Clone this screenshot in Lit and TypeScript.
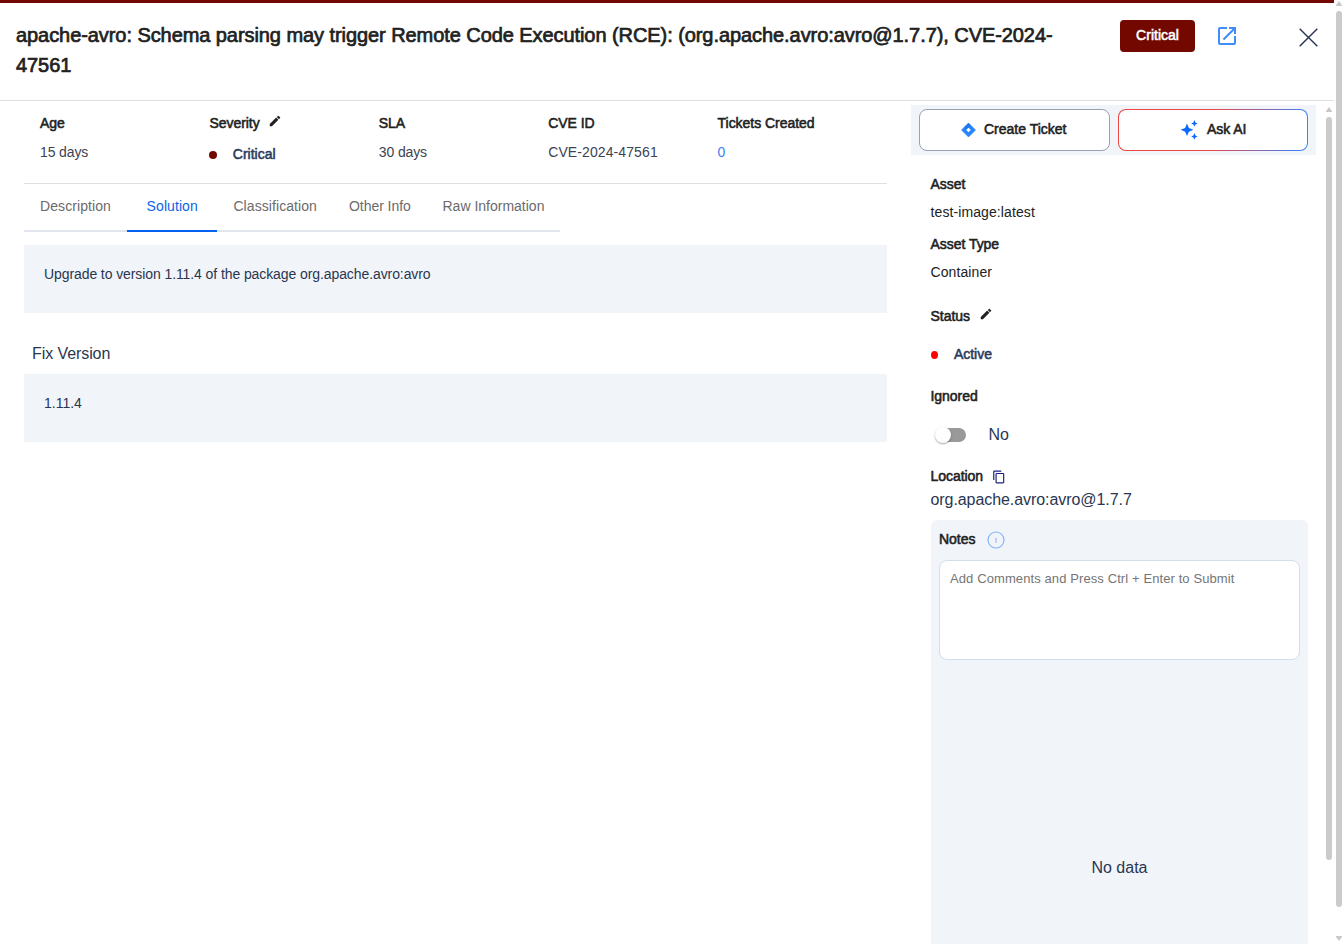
import { LitElement, html, css, svg } from "lit";
import { customElement, property } from "lit/decorators.js";
import { classMap } from "lit/directives/class-map.js";

const pencil = html`<svg class="pencil" viewBox="0 0 24 24" width="14" height="14">
  <path fill="#212121" d="M3 17.25V21h3.75L17.81 9.94l-3.75-3.75L3 17.25zM20.71 7.04a.996.996 0 0 0 0-1.41l-2.34-2.34a.996.996 0 0 0-1.41 0l-1.83 1.83 3.75 3.75 1.83-1.83z" />
</svg>`;

const star = (cx: number, cy: number, r: number) => {
  const k = r * 0.3;
  return svg`<path fill="#0b69ff" d="M${cx} ${cy - r}L${cx + k} ${cy - k}L${cx + r} ${cy}L${cx + k} ${cy + k}L${cx} ${cy + r}L${cx - k} ${cy + k}L${cx - r} ${cy}L${cx - k} ${cy - k}Z" />`;
};

@customElement("scroll-rail")
class ScrollRail extends LitElement {
  @property({ type: Number }) length = 100;
  @property({ type: Boolean }) end = false;

  static styles = css`
    :host { display: flex; flex-direction: column; align-items: center; width: 6px; }
    .arrow { display: block; width: 6px; height: 5px; fill: #c9c9c9; flex: none; }
    .thumb { width: 6px; margin-top: 5px; border-radius: 3px; background: #cbcbcb; flex: none; }
    .down { margin-top: auto; }
  `;

  render() {
    return html`
      <svg class="arrow" viewBox="0 0 6 5"><path d="M3 0L6 4.2V5H0V4.2Z" /></svg>
      <div class="thumb" style="height:${this.length}px"></div>
      ${this.end ? html`<svg class="arrow down" viewBox="0 0 6 5"><path d="M0 0H6V1L3 5L0 1Z" /></svg>` : null}
    `;
  }
}

@customElement("app-root")
class AppRoot extends LitElement {
  static styles = css`
    :host {
      display: flex;
      height: 944px;
      overflow: hidden;
      background: #fff;
      font-family: "Liberation Sans", Arial, sans-serif;
      font-size: 14px;
      line-height: 20px;
      color: #212121;
    }
    * { box-sizing: border-box; }
    svg { display: block; flex: none; }
    .page { width: 1334px; height: 944px; display: flex; flex-direction: column; border-top: 3px solid #730800; }
    .outer { margin: 1px 2px 3px; }
    .strong { -webkit-text-stroke: 0.55px currentColor; }

    header { display: flex; height: 98px; flex: none; border-bottom: 1px solid #dfdfdf; padding: 17px 0 0 16px; align-items: flex-start; }
    h1 { flex: none; margin: 0; width: 1104px; padding-right: 50px; font-size: 20px; font-weight: 400; line-height: 30px; letter-spacing: -0.07px; -webkit-text-stroke: 0.7px currentColor; }
    .badge { flex: none; width: 75px; height: 32px; border-radius: 4px; background: #730800; color: #fff; text-align: center; line-height: 31px; }
    .open { margin: 4px 0 0 20px; }
    .close { margin: 8px 0 0 60px; }

    main { display: flex; flex: 1; min-height: 0; }
    .left { width: 863px; margin-left: 24px; }
    .facts { display: grid; grid-template-columns: repeat(5, 1fr); height: 83px; padding: 12px 0 0 16px; border-bottom: 1px solid #dfdfdf; }
    .label { display: flex; align-items: center; height: 20px; white-space: nowrap; letter-spacing: -0.04px; }
    .facts .pencil { margin: -4px 0 0 8px; }
    .value { margin-top: 9px; color: #3c4354; letter-spacing: 0.1px; }
    .value.days { letter-spacing: -0.12px; }
    .link { color: #3b82f6; }
    .state { display: flex; align-items: center; color: #2b3a5c; letter-spacing: 0; }
    .facts .state { margin-top: 11px; }
    .dot { width: 8px; height: 8px; border-radius: 50%; background: #730800; margin: 1px 15.4px 0 0; }
    .dot.red { width: 7px; background: #f00; margin: 1px 16.4px 0 0; }

    nav { display: flex; width: 536px; height: 48px; }
    .tab { height: 48px; padding: 12px 0 0; border-bottom: 2px solid #e1e5ee; color: #6b6b6b; white-space: nowrap; letter-spacing: 0.08px; }
    .t0 { width: 103px; padding-left: 16px; }
    .t1 { width: 90px; padding-left: 19.6px; }
    .t2 { width: 116px; padding-left: 16.4px; }
    .t3 { width: 109px; padding-left: 16px; letter-spacing: -0.05px; }
    .t4 { width: 118px; padding-left: 0.5px; letter-spacing: 0; }
    .active { color: #0b63e8; border-bottom-color: #0061f2; }
    .panel { height: 68px; margin-top: 13px; padding: 19px 20px; background: #f1f5fa; color: #2a3650; letter-spacing: -0.09px; }
    .fix { margin: 30px 0 0 8px; font-size: 16px; line-height: 22px; color: #2a3650; letter-spacing: -0.08px; }
    .fix + .panel { margin-top: 9px; letter-spacing: 0; }

    aside { width: 405px; margin: 4px 0 0 24px; }
    .actions { display: flex; gap: 8px; height: 50px; padding: 4px 8px; background: #f1f5fa; }
    .btn { display: flex; align-items: center; height: 42px; border: 1px solid #98a1b0; border-radius: 8px; background: #fff; white-space: nowrap; }
    .create { width: 191px; padding-left: 40px; gap: 7px; }
    .create svg { margin-top: -1px; }
    .ask { width: 190px; padding-left: 60px; gap: 7px; border-color: transparent; letter-spacing: -0.05px;
      background: linear-gradient(#fff, #fff) padding-box, linear-gradient(100deg, #ef4444 0%, #ef4444 48%, #3b82f6 96%) border-box; }
    .btn .strong { margin-top: -2px; }
    .info { padding: 19px 0 0 19.5px; }
    .text { letter-spacing: 0.1px; margin: 8px 0 12px; }
    .info .status { margin-top: 24px; }
    .status .pencil { margin: -5px 0 0 9px; }
    .info .state { margin: 18px 0 22px; }
    .switch { display: flex; align-items: center; height: 20px; margin: 19px 0 21px; padding-left: 4px; }
    .track { width: 28px; height: 14px; margin-left: 3px; border-radius: 7px; background: #999; display: flex; align-items: center; }
    .knob { flex: none; width: 16px; height: 16px; margin-left: -3px; border-radius: 50%; background: #fff; box-shadow: 0 1px 2px rgba(0, 0, 0, 0.35); }
    .big { font-size: 16px; color: #2a3650; }
    .no { margin-left: 23px; }
    .copy { margin: 1px 0 0 8.5px; }
    .path { margin-top: 4px; letter-spacing: -0.07px; }
    .notes { width: 377px; height: 440px; margin: 10px 0 0 20px; padding: 9px 8px; border-radius: 6px 6px 0 0; background: #f1f5fa; }
    .notes .info-icon { margin: 2px 0 0 11.5px; }
    .box { display: block; width: 361px; height: 100px; margin-top: 11px; padding: 8px 10px; border: 1px solid #d5ddea; border-radius: 8px; outline: none; resize: none; background: #fff; font: 13px/20px "Liberation Sans", Arial, sans-serif; letter-spacing: 0.1px; }
    .box::placeholder { color: #757575; opacity: 1; }
    .empty { margin-top: 198px; text-align: center; }
    .inner { margin: 6px 0 0 10px; }
  `;

  render() {
    const tabs = ["Description", "Solution", "Classification", "Other Info", "Raw Information"];
    return html`
      <div class="page">
        <header>
          <h1>apache-avro: Schema parsing may trigger Remote Code Execution (RCE): (org.apache.avro:avro@1.7.7), CVE-2024-47561</h1>
          <div class="badge strong">Critical</div>
          <svg class="open" width="24" height="24" viewBox="0 0 24 24">
            <path fill="#3f8cfb" d="M19 19H5V5h7V3H5a2 2 0 0 0-2 2v14a2 2 0 0 0 2 2h14c1.1 0 2-.9 2-2v-7h-2v7zM14 3v2h3.59l-9.83 9.83 1.41 1.41L19 6.41V10h2V3h-7z" />
          </svg>
          <svg class="close" width="19" height="19" viewBox="0 0 19 19">
            <path d="M.7.7L18.3 18.3M18.3.7L.7 18.3" stroke="#26324f" stroke-width="1.4" fill="none" />
          </svg>
        </header>
        <main>
          <section class="left">
            <div class="facts">
              <div><div class="label strong">Age</div><div class="value days">15 days</div></div>
              <div>
                <div class="label strong">Severity ${pencil}</div>
                <div class="state"><span class="dot"></span><span class="strong">Critical</span></div>
              </div>
              <div><div class="label strong">SLA</div><div class="value days">30 days</div></div>
              <div><div class="label strong">CVE ID</div><div class="value">CVE-2024-47561</div></div>
              <div><div class="label strong">Tickets Created</div><div class="value link">0</div></div>
            </div>
            <nav>
              ${tabs.map((t, i) => html`<div class=${classMap({ tab: true, [`t${i}`]: true, active: i === 1 })}>${t}</div>`)}
            </nav>
            <div class="panel">Upgrade to version 1.11.4 of the package org.apache.avro:avro</div>
            <div class="fix">Fix Version</div>
            <div class="panel">1.11.4</div>
          </section>
          <aside>
            <div class="actions">
              <div class="btn create">
                <svg width="17" height="16" viewBox="0 0 17 16">
                  <path fill="#2684ff" d="M8.5 1L15.5 8L8.5 15L1.5 8Z" stroke="#2684ff" stroke-width=".6" stroke-linejoin="round" />
                  <path fill="#1668e8" d="M8.5 1L11 3.5L8.5 5.7L6 8L3.7 5.8Z" opacity=".5" />
                  <path fill="#fff" d="M8.5 5.7L10.8 8L8.5 10.3L6.2 8Z" />
                </svg>
                <span class="strong">Create Ticket</span>
              </div>
              <div class="btn ask">
                <svg width="21" height="20" viewBox="0 0 21 20">${star(8, 9.8, 6.3)}${star(15.4, 3.4, 3.3)}${star(15.4, 16.4, 3.3)}</svg>
                <span class="strong">Ask AI</span>
              </div>
            </div>
            <div class="info">
              <div class="label strong">Asset</div>
              <div class="text">test-image:latest</div>
              <div class="label strong">Asset Type</div>
              <div class="text">Container</div>
              <div class="label strong status">Status ${pencil}</div>
              <div class="state"><span class="dot red"></span><span class="strong">Active</span></div>
              <div class="label strong">Ignored</div>
              <div class="switch"><span class="track"><span class="knob"></span></span><span class="big no">No</span></div>
              <div class="label strong">Location
                <svg class="copy" width="14" height="14" viewBox="0 0 24 24">
                  <path fill="#1a237e" d="M16 1H4a2 2 0 0 0-2 2v14h2V3h12V1zm3 4H8a2 2 0 0 0-2 2v14c0 1.100.9 2 2 2h11a2 2 0 0 0 2-2V7a2 2 0 0 0-2-2zm0 16H8V7h11v14z" />
                </svg>
              </div>
              <div class="big path">org.apache.avro:avro@1.7.7</div>
            </div>
            <div class="notes">
              <div class="label"><span class="strong">Notes</span>
                <svg class="info-icon" width="18" height="18" viewBox="0 0 18 18" fill="none" stroke="#86b4f8">
                  <circle cx="9" cy="9" r="8" stroke-width="1.2" /><path d="M9 7.200V12M8 7.500H9" stroke-width="1" />
                </svg>
              </div>
              <textarea class="box" placeholder="Add Comments and Press Ctrl + Enter to Submit"></textarea>
              <div class="big empty">No data</div>
            </div>
          </aside>
          <scroll-rail class="inner" .length=${743}></scroll-rail>
        </main>
      </div>
      <scroll-rail class="outer" .length=${896} .end=${true}></scroll-rail>
    `;
  }
}
